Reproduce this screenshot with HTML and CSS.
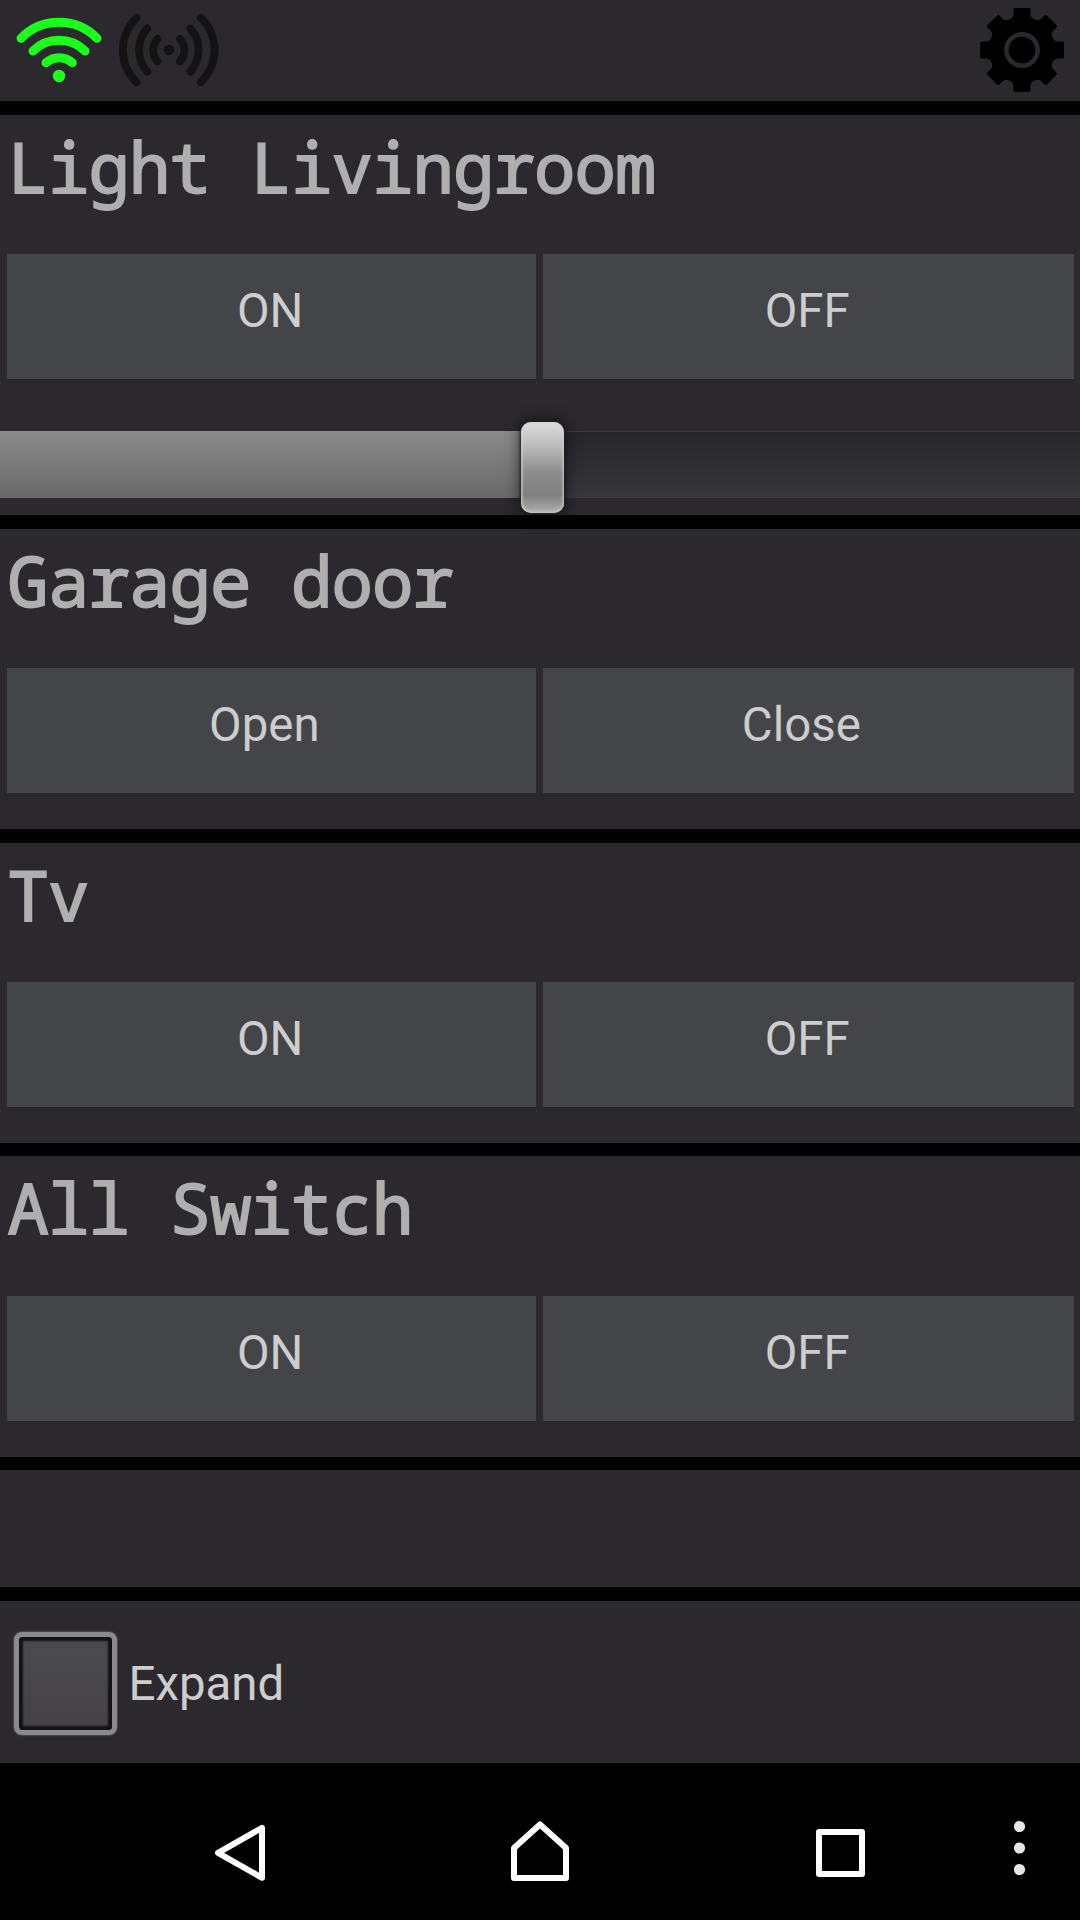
FILE: index.html
```html
<!DOCTYPE html>
<html lang="en">
<head>
<meta charset="utf-8">
<title>Home control</title>
<link rel="stylesheet" href="styles.css">
</head>
<body>
<main class="app">
  <header class="topbar">
    <svg class="status" viewBox="0 0 240 101" fill="none" stroke-linecap="round">
      <g stroke="#1cff1c" stroke-width="9">
        <path d="M21 38.3A53 53 0 0 1 97 38.3"/>
        <path d="M33 51A37 37 0 0 1 85 51"/>
        <path d="M46 62.7A20 20 0 0 1 72.3 62.7"/>
      </g>
      <circle cx="59" cy="76" r="6.2" fill="#1cff1c"/>
      <g stroke="#131313" stroke-width="7.8">
        <path d="M180 39A16.4 16.4 0 0 1 180 61.3"/>
        <path d="M190.4 28.4A32.7 32.7 0 0 1 190.4 71.6"/>
        <path d="M200.8 17.8A44.7 44.7 0 0 1 200.8 82.2"/>
        <path d="M157.6 39A16.4 16.4 0 0 0 157.6 61.3"/>
        <path d="M147.2 28.4A32.7 32.7 0 0 0 147.2 71.6"/>
        <path d="M136.6 17.8A44.7 44.7 0 0 0 136.6 82.2"/>
      </g>
      <circle cx="168.8" cy="50" r="5.3" fill="#131313"/>
    </svg>
    <svg class="gear" viewBox="-58 -50 116 101">
      <defs><path id="tooth" d="M-6.5-42H6.5Q8.5-42 8.5-40V-35Q9.5-31.2 12.7-30.7L0 0L-12.7-30.7Q-9.5-31.2-8.5-35V-40Q-8.5-42-6.5-42Z"/></defs>
      <circle r="31.5"/>
      <use href="#tooth"/>
      <use href="#tooth" transform="rotate(45)"/>
      <use href="#tooth" transform="rotate(90)"/>
      <use href="#tooth" transform="rotate(135)"/>
      <use href="#tooth" transform="rotate(180)"/>
      <use href="#tooth" transform="rotate(225)"/>
      <use href="#tooth" transform="rotate(270)"/>
      <use href="#tooth" transform="rotate(315)"/>
      <circle r="15.6" fill="none" stroke="#2b292e" stroke-width="4.6"/>
    </svg>
  </header>

  <section class="card dimmer">
    <h2 class="title">Light Livingroom</h2>
    <div class="buttons"><button class="btn">ON</button><button class="btn">OFF</button></div>
    <div class="slider"><div class="fill"></div><div class="thumb"></div></div>
  </section>

  <section class="card">
    <h2 class="title">Garage door</h2>
    <div class="buttons"><button class="btn">Open </button><button class="btn">Close </button></div>
  </section>

  <section class="card">
    <h2 class="title">Tv</h2>
    <div class="buttons"><button class="btn">ON</button><button class="btn">OFF</button></div>
  </section>

  <section class="card">
    <h2 class="title">All Switch</h2>
    <div class="buttons"><button class="btn">ON</button><button class="btn">OFF</button></div>
  </section>

  <section class="card blank"></section>

  <label class="expand"><span class="box"></span><span>Expand</span></label>

  <nav class="navbar">
    <svg viewBox="0 0 1080 157" fill="none" stroke="#fff" stroke-width="6" stroke-linejoin="round">
      <path d="M218 89.8L262 64.8V114.8Z"/>
      <path d="M540 61.5L566 85V115H514V85Z"/>
      <rect x="819" y="69" width="43" height="42"/>
      <g fill="#e6e6e6" stroke="none">
        <circle cx="1019.5" cy="63.5" r="5.6"/>
        <circle cx="1019.5" cy="85" r="5.6"/>
        <circle cx="1019.5" cy="106.5" r="5.6"/>
      </g>
    </svg>
  </nav>
</main>
</body>
</html>
```
FILE: styles.css
```css
* { box-sizing: border-box; }

body {
  margin: 0;
  background: #000;
  color: #cdcdcd;
  font: 47.4px Roboto, sans-serif;
}

.app {
  width: 1080px;
  height: 1920px;
  display: flex;
  flex-direction: column;
  overflow: hidden;
}

.topbar {
  height: 101px;
  margin-bottom: 13.7px;
  display: flex;
  justify-content: space-between;
  background: #2b292e;
}

.status { width: 240px; height: 101px; }
.gear { width: 116px; height: 101px; }

.card {
  height: 300.4px;
  margin-bottom: 13.4px;
  padding: 0 6px 0 7px;
  background: #2b292e;
}

.dimmer { height: 400.8px; }
.blank { height: 117px; }

.title {
  margin: 0;
  height: 139.3px;
  padding: 11px 0 0 0.5px;
  color: #afafaf;
  font: 400 69px/80px "Droid Sans Mono", "Noto Sans Mono", "DejaVu Sans Mono", monospace;
  letter-spacing: -0.9px;
  -webkit-text-stroke: 1.8px #afafaf;
  white-space: pre;
}

.buttons {
  display: grid;
  grid-template-columns: 529.4px 530.6px;
  gap: 7px;
}

.btn {
  height: 125px;
  padding: 0 3px 11px 0;
  border: 0;
  background: #444549;
  color: inherit;
  font: inherit;
  white-space: pre;
}

.slider {
  position: relative;
  height: 67px;
  margin: 52px -6px 0 -7px;
  border: solid #3c3b40;
  border-width: 1px 0;
  background: linear-gradient(#272529, #2e2e32 50%, #38373c);
}

.fill {
  width: 542px;
  height: 67px;
  margin-top: -1px;
  background: linear-gradient(#8a8a8a, #696969);
}

.thumb {
  position: absolute;
  left: 521px;
  top: -10px;
  width: 43px;
  height: 91px;
  border-radius: 10px;
  background: linear-gradient(#dedede, #bdbdbd 25%, #8c8c8c 55%, #7f7f7f 80%, #b0b0b0);
  box-shadow: inset 0 0 3px 1px #d0d0d0, 0 0 3px 1px #1c1c1e, 0 0 14px 4px rgba(0, 0, 0, .4);
}

.expand {
  height: 162px;
  display: flex;
  align-items: center;
  gap: 11.5px;
  padding: 4px 0 0 14px;
  background: #2b292e;
}

.box {
  width: 103px;
  height: 103px;
  border: 5px solid #8b8b8f;
  border-radius: 8px;
  background: linear-gradient(#4c4b4f, #444246);
  box-shadow: inset 0 0 2px 4px #121214, 0 0 2px #8b8b8f;
}

.navbar { height: 157px; }
.navbar svg { display: block; width: 1080px; height: 157px; }
```
